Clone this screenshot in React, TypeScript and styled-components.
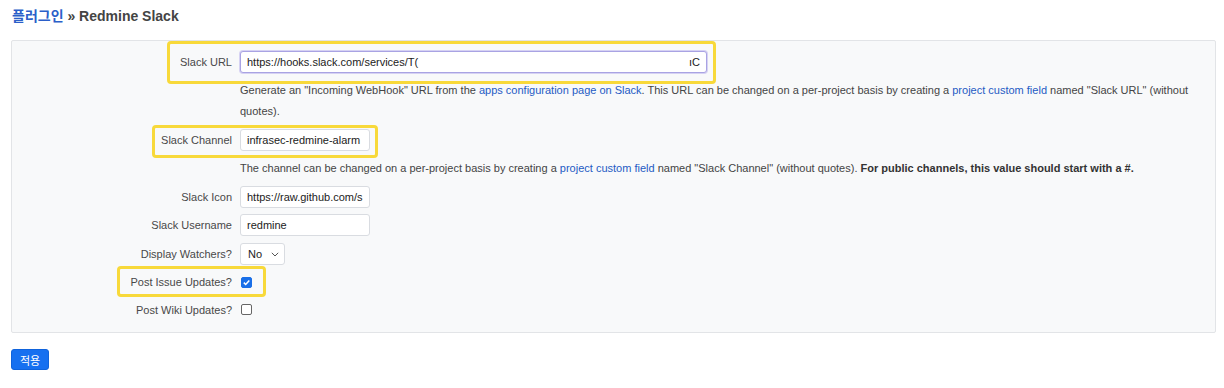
import styled, { createGlobalStyle } from "styled-components";

const GlobalStyle = createGlobalStyle`
  body {
    margin: 0;
    background: #ffffff;
    color: #333333;
    font-family: "Liberation Sans", Arial, "Noto Sans CJK KR", sans-serif;
  }
`;

const Page = styled.div`
  padding: 7px 8px 0 11px;
`;

const Title = styled.h2`
  margin: 0 0 14px 1px;
  font-size: 14px;
  line-height: 19px;
  font-weight: 600;
  color: #444444;
`;

const Crumb = styled.a`
  color: #2b5fc9;
  text-decoration: none;
`;

const Panel = styled.div`
  display: flex;
  flex-direction: column;
  gap: 6px;
  padding: 10px 0 11px;
  background: #f8f9fa;
  border: 1px solid #e2e4e7;
  border-radius: 2px;
`;

const Row = styled.div`
  position: relative;
  display: grid;
  grid-template-columns: 220px 1fr;
  column-gap: 8px;
  align-items: center;
  min-height: 22px;
`;

const Label = styled.label`
  text-align: right;
  font-size: 11px;
  color: #484848;
`;

const Help = styled.p`
  margin: 1px 0 1px 228px;
  padding-right: 18px;
  font-size: 11px;
  line-height: 21px;
  color: #444444;

  a {
    color: #1f5bc4;
    text-decoration: none;
  }

  strong {
    color: #333333;
  }
`;

const Field = styled.div<{ $w: number; $focus?: boolean }>`
  position: relative;
  display: flex;
  align-items: center;
  justify-content: space-between;
  box-sizing: border-box;
  width: ${({ $w }) => $w}px;
  height: 22px;
  padding: 0 6px;
  background: #ffffff;
  border: 1px solid ${({ $focus }) => ($focus ? "#a9a3e3" : "#d9dce1")};
  border-radius: 3px;
  box-shadow: ${({ $focus }) => ($focus ? "0 0 0 1px #d6d2f3" : "none")};
  font-size: 11px;
  color: #222222;
  overflow: hidden;
  white-space: nowrap;
`;

const SelectBox = styled.div`
  display: flex;
  align-items: center;
  justify-content: space-between;
  box-sizing: border-box;
  width: 45px;
  height: 22px;
  margin-top: 1px;
  padding: 0 5px 0 7px;
  background: #ffffff;
  border: 1px solid #d9dce1;
  border-radius: 3px;
  font-size: 11px;
  color: #222222;
`;

const Check = styled.span<{ $on?: boolean }>`
  display: inline-flex;
  align-items: center;
  justify-content: center;
  box-sizing: border-box;
  width: 11px;
  height: 11px;
  margin-left: 1px;
  border-radius: 2px;
  background: ${({ $on }) => ($on ? "#1a6fe8" : "#ffffff")};
  border: 1px solid ${({ $on }) => ($on ? "#1a6fe8" : "#666666")};
`;

const Highlight = styled.div<{ $l: number; $t: number; $w: number; $h: number }>`
  position: absolute;
  left: ${({ $l }) => $l}px;
  top: ${({ $t }) => $t}px;
  width: ${({ $w }) => $w}px;
  height: ${({ $h }) => $h}px;
  box-sizing: border-box;
  border: 3px solid #f8d93a;
  border-radius: 4px;
  pointer-events: none;
`;

const Button = styled.button`
  margin-top: 16px;
  height: 21px;
  padding: 0 8px;
  background: #1670f0;
  color: #ffffff;
  border: 1px solid #0f63dc;
  border-radius: 3px;
  font-family: "Liberation Sans", Arial, "Noto Sans CJK KR", sans-serif;
  font-size: 11px;
`;

const Chevron = () => (
  <svg width="8" height="5" viewBox="0 0 8 5">
    <path d="M0.8 0.8 L4 4 L7.2 0.8" fill="none" stroke="#555" strokeWidth="1" />
  </svg>
);

const Tick = () => (
  <svg width="9" height="9" viewBox="0 0 9 9">
    <path d="M1.8 4.6 L3.7 6.5 L7.3 2.4" fill="none" stroke="#fff" strokeWidth="1.5" />
  </svg>
);

export default function App() {
  return (
    <Page>
      <GlobalStyle />
      <Title>
        <Crumb href="#">플러그인</Crumb> » Redmine Slack
      </Title>
      <form>
        <Panel>
          <Row>
            <Highlight $l={155} $t={-10} $w={549} $h={43} />
            <Label>Slack URL</Label>
            <Field $w={467} $focus>
              <span>https://hooks.slack.com/services/T(</span>
              <span>ıC</span>
            </Field>
          </Row>
          <Help>
            Generate an "Incoming WebHook" URL from the <a href="#">apps configuration page on Slack</a>. This URL can be changed on a per-project basis by creating a <a href="#">project custom field</a> named "Slack URL" (without quotes).
          </Help>
          <Row>
            <Highlight $l={140} $t={-4} $w={226} $h={33} />
            <Label>Slack Channel</Label>
            <Field $w={130}>infrasec-redmine-alarm</Field>
          </Row>
          <Help>
            The channel can be changed on a per-project basis by creating a <a href="#">project custom field</a> named "Slack Channel" (without quotes). <strong>For public channels, this value should start with a #.</strong>
          </Help>
          <Row>
            <Label>Slack Icon</Label>
            <Field $w={130}>https://raw.github.com/s</Field>
          </Row>
          <Row>
            <Label>Slack Username</Label>
            <Field $w={130}>redmine</Field>
          </Row>
          <Row>
            <Label>Display Watchers?</Label>
            <SelectBox>
              <span>No</span>
              <Chevron />
            </SelectBox>
          </Row>
          <Row>
            <Highlight $l={105} $t={-5} $w={149} $h={31} />
            <Label>Post Issue Updates?</Label>
            <div>
              <Check $on>
                <Tick />
              </Check>
            </div>
          </Row>
          <Row>
            <Label>Post Wiki Updates?</Label>
            <div>
              <Check />
            </div>
          </Row>
        </Panel>
        <Button type="button">적용</Button>
      </form>
    </Page>
  );
}
